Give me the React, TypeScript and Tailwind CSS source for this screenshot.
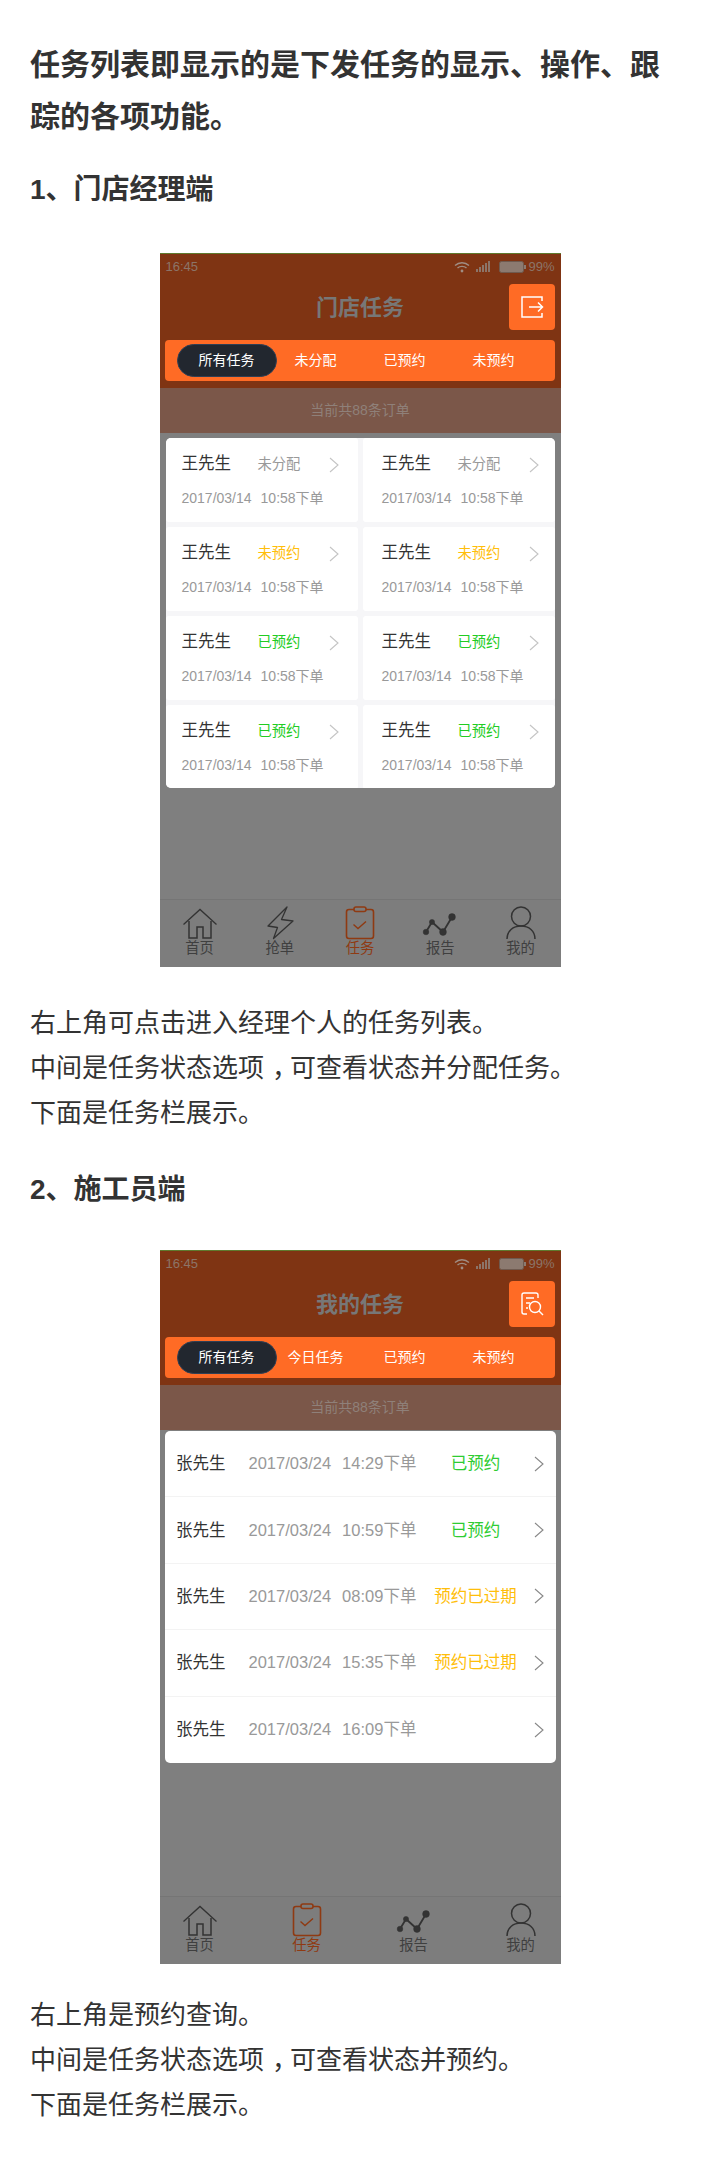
import React from 'react';

const FONT = "font-['Liberation_Sans','Noto_Sans_CJK_SC',sans-serif]";

const Chevron = ({ className }: { className: string }) => (
  <svg width="10" height="16" viewBox="0 0 10 16" fill="none" className={className}>
    <path d="M1 1L9 8L1 15" stroke="currentColor" strokeWidth="1.1" />
  </svg>
);

const StatusBar = () => (
  <div className="flex h-[26px] items-center pl-[6px] pr-[6px] text-[13px] text-[#8c7468]">
    <span>16:45</span>
    <svg width="16" height="12" viewBox="0 0 16 12" fill="none" className="ml-auto">
      <path d="M1 4.5C5 .8 11 .8 15 4.5M3.5 7C6 4.8 10 4.8 12.5 7" stroke="#a08d83" strokeWidth="1.4" />
      <circle cx="8" cy="10" r="1.4" fill="#a08d83" />
    </svg>
    <svg width="14" height="12" viewBox="0 0 14 12" className="ml-[6px]" fill="#8c7468">
      <rect x="0" y="8" width="2" height="3" />
      <rect x="3" y="6" width="2" height="5" />
      <rect x="6" y="4" width="2" height="7" />
      <rect x="9" y="2" width="2" height="9" />
      <rect x="12" y="0" width="2" height="11" />
    </svg>
    <svg width="27" height="12" viewBox="0 0 27 12" className="ml-[9px]">
      <rect x="0.5" y="0.5" width="24" height="11" rx="2" fill="#8c7a70" stroke="#6f5a4f" />
      <rect x="25" y="4" width="2" height="4" fill="#8c7a70" />
    </svg>
    <span className="ml-[2px]">99%</span>
  </div>
);

const ExitIcon = () => (
  <svg width="24" height="24" viewBox="0 0 24 24" fill="none" stroke="#fff" strokeWidth="1.5">
    <path d="M22 6V2H2V22H22V18" />
    <path d="M9 12H22.5M18 7.5L22.5 12L18 16.5" />
  </svg>
);

const SearchDocIcon = () => (
  <svg width="24" height="24" viewBox="0 0 24 24" fill="none" stroke="#fff" strokeWidth="1.4">
    <path d="M18 6V3A2 2 0 0 0 16 1H4A2 2 0 0 0 2 3V20A2 2 0 0 0 4 22H7" />
    <path d="M6 6H14M6 11H10M6 16H8" />
    <circle cx="15" cy="15" r="5.5" />
    <path d="M19 19L23 23" />
  </svg>
);

const HomeIcon = () => (
  <svg width="36" height="32" viewBox="0 0 36 32" fill="none" stroke="#333" strokeWidth="1.3">
    <path d="M1.5 16.5L18 1.5L34.5 16.5" />
    <path d="M7 13V30H15V19H21V30H29V13" strokeWidth="1.5" />
  </svg>
);

const BoltIcon = () => (
  <svg width="28" height="34" viewBox="0 0 28 34" fill="none" stroke="#333" strokeWidth="1.3">
    <path d="M21 1L15.5 13.5L27 15L7.5 32.5L11.5 21.5L2 20Z" strokeLinejoin="round" />
  </svg>
);

const TaskIcon = () => (
  <svg width="30" height="34" viewBox="0 0 30 34" fill="none" stroke="#8f3a12" strokeWidth="1.6">
    <rect x="1.5" y="3.5" width="27" height="29" rx="2.5" />
    <rect x="9" y="1" width="12" height="4.5" rx="2" fill="#7d7d7d" />
    <path d="M8.5 18.5L13 22.5L21 15.5" strokeWidth="1.4" />
  </svg>
);

const ChartIcon = () => (
  <svg width="36" height="28" viewBox="0 0 36 28" fill="#333" stroke="#333" strokeWidth="1.8" className="mb-[3px]">
    <path d="M4 23L10 13L21 23L30 8" fill="none" />
    <circle cx="4" cy="23" r="2.8" strokeWidth="0.5" />
    <circle cx="10" cy="13" r="2.6" strokeWidth="0.5" />
    <circle cx="21" cy="23" r="3.4" strokeWidth="0.5" />
    <circle cx="30" cy="8" r="3.4" strokeWidth="0.5" />
  </svg>
);

const UserIcon = () => (
  <svg width="30" height="34" viewBox="0 0 30 34" fill="none" stroke="#333" strokeWidth="1.5">
    <circle cx="15" cy="10.5" r="9.5" />
    <path d="M1 33C1 25 7 20 15 20C23 20 29 25 29 33" />
  </svg>
);

const NAV: Record<string, React.ReactNode> = {
  首页: <HomeIcon />,
  抢单: <BoltIcon />,
  任务: <TaskIcon />,
  报告: <ChartIcon />,
  我的: <UserIcon />,
};

interface PhoneProps {
  title: string;
  action: React.ReactNode;
  tabs: string[];
  nav: string[];
  children: React.ReactNode;
}

const Phone = ({ title, action, tabs, nav, children }: PhoneProps) => (
  <div className="mx-auto flex h-[714px] w-[401px] flex-col border-t border-[#5f7a2e] bg-[#7f7f7f]">
    <div className="h-[134px] bg-[#7f3413]">
      <StatusBar />
      <div className="grid h-[46px] mt-[4px] grid-cols-[1fr_auto_1fr] items-center">
        <div />
        <div className="text-[22px] font-bold text-[#777777]">{title}</div>
        <div className="flex justify-end pr-[6px]">
          <div className="flex h-[46px] w-[46px] items-center justify-center rounded-[4px] bg-[#ff6b25]">{action}</div>
        </div>
      </div>
      <div className="mx-[5.5px] mt-[10px] flex h-[41px] items-center rounded-[4px] bg-[#ff6b25] pl-[17px] text-[14px] text-white">
        {tabs.map((tab, index) => (
          <div key={tab} className="flex w-[89px] justify-center">
            {index === 0 ? (
              <div className="flex h-[33px] w-[100px] shrink-0 items-center justify-center rounded-full border border-[#2f3f55] bg-[#22272f]">
                {tab}
              </div>
            ) : (
              tab
            )}
          </div>
        ))}
      </div>
    </div>
    <div className="flex h-[45px] items-center justify-center bg-[#7b5749] text-[14px] text-[#8f8079]">当前共88条订单</div>
    <div className="flex-1">{children}</div>
    <div className="flex h-[68px] justify-between border-t border-[#757575] bg-[#7d7d7d] px-[25px]">
      {nav.map((name) => (
        <div key={name} className={`flex w-[30px] flex-col items-center ${name === '任务' ? 'text-[#8f3a12]' : 'text-[#3f3f3f]'}`}>
          <div className="mt-[6px] flex h-[34px] items-end justify-center">{NAV[name]}</div>
          <div className="whitespace-nowrap text-[14.3px] leading-[16px]">{name}</div>
        </div>
      ))}
    </div>
  </div>
);

const MANAGER_ROWS = [
  { status: '未分配', color: 'text-[#999999]' },
  { status: '未预约', color: 'text-[#ffbe0a]' },
  { status: '已预约', color: 'text-[#22cc22]' },
  { status: '已预约', color: 'text-[#22cc22]' },
];

const WORKER_ROWS = [
  { time: '14:29', status: '已预约', color: 'text-[#2ecc32]' },
  { time: '10:59', status: '已预约', color: 'text-[#2ecc32]' },
  { time: '08:09', status: '预约已过期', color: 'text-[#ffbe0a]' },
  { time: '15:35', status: '预约已过期', color: 'text-[#ffbe0a]' },
  { time: '16:09', status: '', color: '' },
];

const ManagerCell = ({ status, color, inset }: { status: string; color: string; inset: string }) => (
  <div className={`h-[84px] rounded-[3px] bg-white pt-[13px] ${inset}`}>
    <div className="flex h-[24px] items-center">
      <span className="w-[76px] text-[16.5px] text-[#333333]">王先生</span>
      <span className={`mt-[3px] w-[71px] text-[14.3px] ${color}`}>{status}</span>
      <Chevron className="mt-[3px] text-[#c4c4c4]" />
    </div>
    <div className="mt-[13px] flex text-[14px] leading-[20px] text-[#999999]">
      <span>2017/03/14</span>
      <span className="ml-[9px]">10:58下单</span>
    </div>
  </div>
);

// the source font sets the fullwidth comma in the middle of its box
const Comma = () => <span className="pl-[8px] tracking-[-8px]">，</span>;

const Page = () => (
  <div className={`${FONT} w-[720px] bg-white px-[30px] pt-[39px] text-[#333333]`}>
    <h1 className="max-w-[640px] text-[30px] font-bold leading-[52px]">任务列表即显示的是下发任务的显示、操作、跟踪的各项功能。</h1>
    <h2 className="mt-[27px] text-[28px] font-bold leading-[40px]">1、门店经理端</h2>
    <div className="mt-[43px]">
      <Phone title="门店任务" action={<ExitIcon />} tabs={['所有任务', '未分配', '已预约', '未预约']} nav={['首页', '抢单', '任务', '报告', '我的']}>
        <div className="mx-[6px] mt-[5px] grid h-[350px] grid-cols-2 gap-[5px] overflow-hidden rounded-[5px] bg-[#f6f6f8]">
          {MANAGER_ROWS.flatMap((row, index) => [
            <ManagerCell key={`${index}-a`} status={row.status} color={row.color} inset="pl-[16px]" />,
            <ManagerCell key={`${index}-b`} status={row.status} color={row.color} inset="pl-[19px]" />,
          ])}
        </div>
      </Phone>
    </div>
    <div className="mt-[34px] text-[26px] leading-[45px]">
      <p>右上角可点击进入经理个人的任务列表。</p>
      <p>中间是任务状态选项<Comma />可查看状态并分配任务。</p>
      <p>下面是任务栏展示。</p>
    </div>
    <h2 className="mt-[34px] text-[28px] font-bold leading-[40px]">2、施工员端</h2>
    <div className="mt-[40px]">
      <Phone title="我的任务" action={<SearchDocIcon />} tabs={['所有任务', '今日任务', '已预约', '未预约']} nav={['首页', '任务', '报告', '我的']}>
        <div className="mx-[5px] mt-[1px] overflow-hidden rounded-[5px] bg-white">
          {WORKER_ROWS.map((row, index) => (
            <div key={index} className="flex h-[66.4px] items-center border-b border-[#f3f3f3] pl-[11.5px] text-[16.5px] last:border-b-0">
              <span className="w-[72.5px] text-[#333333]">张先生</span>
              <span className="flex w-[184px] text-[#999999]">
                <span>2017/03/24</span>
                <span className="ml-[11px]">{row.time}下单</span>
              </span>
              <span className={`w-[86px] text-center ${row.color}`}>{row.status}</span>
              <Chevron className="ml-[15px] text-[#888888]" />
            </div>
          ))}
        </div>
      </Phone>
    </div>
    <div className="mt-[29px] text-[26px] leading-[45px]">
      <p>右上角是预约查询。</p>
      <p>中间是任务状态选项<Comma />可查看状态并预约。</p>
      <p>下面是任务栏展示。</p>
    </div>
  </div>
);

export default function App() {
  return <Page />;
}
